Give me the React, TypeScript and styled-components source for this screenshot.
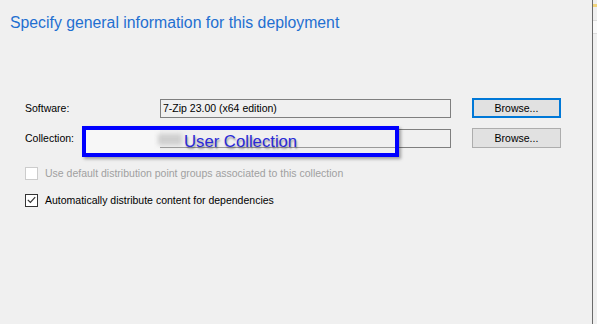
import * as React from 'react';
import styled, { createGlobalStyle } from 'styled-components';

const GlobalStyle = createGlobalStyle`
    html, body {
        margin: 0;
        padding: 0;
        background: #f0f0f0;
    }
    body {
        font-family: "Liberation Sans", Arial, sans-serif;
    }
`;

const Window = styled.div`
    display: flex;
    width: 597px;
    height: 324px;
    overflow: hidden;
    background: #f0f0f0;
`;

const Main = styled.div`
    flex: 1;
    display: flex;
    flex-direction: column;
    padding: 14px 0 0 10px;
`;

const Divider = styled.div`
    width: 1px;
    background: #6b6b6b;
`;

const EdgeStrip = styled.div`
    width: 4px;
    display: flex;
    flex-direction: column;
    padding-top: 4px;
    gap: 13px;
`;

const EdgeMark = styled.div<{ $tone: 'accent' | 'panel' }>`
    height: ${(p) => (p.$tone === 'accent' ? '3px' : '12px')};
    background: ${(p) => (p.$tone === 'accent' ? '#f2d57c' : '#fafafa')};
    border-top: ${(p) => (p.$tone === 'panel' ? '1px solid #dcdcdc' : 'none')};
    border-bottom: ${(p) => (p.$tone === 'panel' ? '1px solid #dcdcdc' : 'none')};
`;

const Title = styled.h1`
    margin: 0;
    font-size: 15.8px;
    line-height: 18px;
    font-weight: normal;
    color: #1f6fd1;
`;

const Form = styled.div`
    display: flex;
    flex-direction: column;
    padding: 66px 0 0 15px;
`;

const FieldRow = styled.div`
    position: relative;
    display: grid;
    grid-template-columns: 114px 291px 89px;
    column-gap: 21px;
    align-items: center;
    height: 20px;
    margin-bottom: 10px;
`;

const Label = styled.span`
    font-size: 10.5px;
    color: #000;
`;

const TextBox = styled.div`
    box-sizing: border-box;
    height: 19px;
    border: 1px solid #7f7f7f;
    background: #f0f0f0;
    font-size: 10.5px;
    line-height: 17px;
    padding-left: 2px;
    color: #000;
`;

const Button = styled.button<{ $focused?: boolean }>`
    box-sizing: border-box;
    height: 20px;
    margin: 0;
    padding: 0;
    border: ${(p) => (p.$focused ? '2px solid #0078d7' : '1px solid #adadad')};
    background: #e1e1e1;
    font-family: "Liberation Sans", Arial, sans-serif;
    font-size: 10.5px;
    color: #000;
`;

const Highlight = styled.div`
    position: absolute;
    left: 57px;
    top: -2px;
    width: 317px;
    height: 31px;
    box-sizing: border-box;
    border: 4px solid #0000ff;
    box-shadow: 2px 2px 3px rgba(0, 0, 0, 0.35);
    background: linear-gradient(to right, #f7f7f7 0, #f7f7f7 74px, #f0f0f0 74px);
    display: flex;
    align-items: center;
    padding-left: 98px;
`;

const Smudge = styled.div`
    position: absolute;
    left: 72px;
    top: 4px;
    width: 24px;
    height: 11px;
    background: #cfcfcf;
    filter: blur(2px);
`;

const BaseLine = styled.div`
    position: absolute;
    left: 74px;
    right: 0;
    bottom: 5px;
    height: 1px;
    background: #9a9a9a;
`;

const StickerText = styled.span`
    position: relative;
    font-size: 16.7px;
    color: #2a2ad6;
    text-shadow: 1px 2px 2px rgba(0, 0, 0, 0.35);
`;

const CheckRow = styled.label<{ $disabled?: boolean }>`
    display: flex;
    align-items: center;
    gap: 7px;
    height: 16px;
    font-size: 10.5px;
    color: ${(p) => (p.$disabled ? '#a0a0a0' : '#000')};
`;

const CheckBox = styled.span<{ $disabled?: boolean }>`
    box-sizing: border-box;
    width: 13px;
    height: 13px;
    border: 1px solid ${(p) => (p.$disabled ? '#cccccc' : '#333333')};
    background: #fff;
    display: flex;
    align-items: center;
    justify-content: center;
`;

const Checks = styled.div`
    display: flex;
    flex-direction: column;
    gap: 11px;
    padding-top: 7px;
`;

export default function App() {
    return (
        <>
            <GlobalStyle />
            <Window>
                <Main>
                    <Title>Specify general information for this deployment</Title>
                    <Form>
                        <FieldRow>
                            <Label>Software:</Label>
                            <TextBox>7-Zip 23.00 (x64 edition)</TextBox>
                            <Button $focused>Browse...</Button>
                        </FieldRow>
                        <FieldRow>
                            <Label>Collection:</Label>
                            <TextBox />
                            <Button>Browse...</Button>
                            <Highlight>
                                <Smudge />
                                <BaseLine />
                                <StickerText>User Collection</StickerText>
                            </Highlight>
                        </FieldRow>
                        <Checks>
                            <CheckRow $disabled>
                                <CheckBox $disabled />
                                Use default distribution point groups associated to this collection
                            </CheckRow>
                            <CheckRow>
                                <CheckBox>
                                    <svg width="9" height="8" viewBox="0 0 9 8">
                                        <path d="M0.8 3.8 L3.4 6.4 L8.2 1.2" fill="none" stroke="#333" strokeWidth="1.2" />
                                    </svg>
                                </CheckBox>
                                Automatically distribute content for dependencies
                            </CheckRow>
                        </Checks>
                    </Form>
                </Main>
                <Divider />
                <EdgeStrip>
                    <EdgeMark $tone="accent" />
                    <EdgeMark $tone="panel" />
                </EdgeStrip>
            </Window>
        </>
    );
}
